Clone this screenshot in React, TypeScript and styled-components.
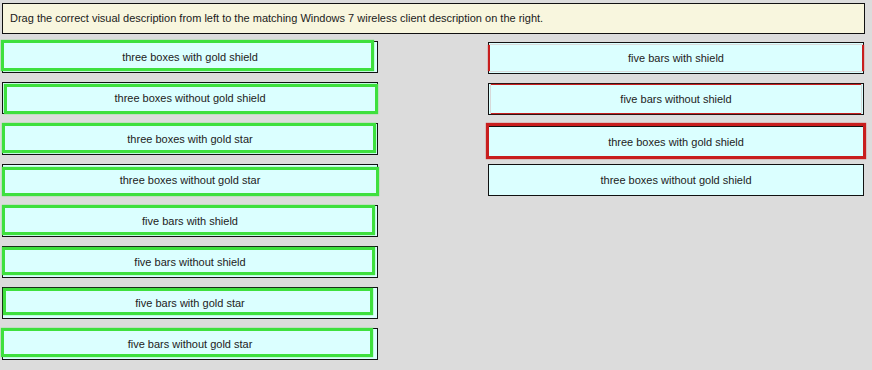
import styled, { createGlobalStyle } from 'styled-components'

const GlobalStyle = createGlobalStyle`
    html, body {
        margin: 0;
        padding: 0;
        background: #dcdcdc;
    }
    body {
        font-family: Arial, "Liberation Sans", sans-serif;
    }
`

const Page = styled.div`
    box-sizing: border-box;
    min-height: 370px;
    padding: 3px 0 0 2px;
    background: #dcdcdc;
`

const Instructions = styled.div`
    box-sizing: border-box;
    width: 863px;
    height: 31px;
    padding-left: 7px;
    border: 1px solid #111;
    background: #f8f6de;
    color: #1a1a1a;
    font-size: 11px;
    line-height: 29px;
`

const Board = styled.div`
    display: flex;
    gap: 110px;
    margin-top: 7px;
`

const Column = styled.div<{ $gap: number }>`
    display: flex;
    flex-direction: column;
    gap: ${p => p.$gap}px;
    width: 376px;
`

const Card = styled.div<{ $mt?: number }>`
    position: relative;
    box-sizing: border-box;
    height: 32px;
    margin-top: ${p => p.$mt ?? 0}px;
    display: flex;
    align-items: center;
    justify-content: center;
    border: 1px solid #111;
    background: #dbffff;
    color: #222;
    font-size: 11px;
`

type Inset = [number, number, number, number]

const Frame = styled.div<{ $inset: Inset; $color: string; $width: string }>`
    position: absolute;
    top: ${p => p.$inset[0]}px;
    right: ${p => p.$inset[1]}px;
    bottom: ${p => p.$inset[2]}px;
    left: ${p => p.$inset[3]}px;
    border-style: solid;
    border-color: ${p => p.$color};
    border-width: ${p => p.$width};
    box-shadow: 0 0 1px ${p => p.$color};
    pointer-events: none;
`

const GREEN = '#3ee03e'
const RED = '#c81e1e'

const choices: { label: string; inset: Inset }[] = [
    { label: 'three boxes with gold shield', inset: [-2, 3, 1, -2] },
    { label: 'three boxes without gold shield', inset: [1, -1, -1, 1] },
    { label: 'three boxes with gold star', inset: [-1, 1, 1, -1] },
    { label: 'three boxes without gold star', inset: [2, -2, -1, -1] },
    { label: 'five bars with shield', inset: [-1, 2, 1, -1] },
    { label: 'five bars without shield', inset: [0, 2, 2, -1] },
    { label: 'five bars with gold star', inset: [0, 4, 3, 0] },
    { label: 'five bars without gold star', inset: [-1, 4, 2, -2] },
]

const targets: { label: string; mt: number; frame?: { inset: Inset; width: string } }[] = [
    { label: 'five bars with shield', mt: 1, frame: { inset: [2, -1, 2, -1], width: '0 2px' } },
    { label: 'five bars without shield', mt: 9, frame: { inset: [0, 2, 0, 2], width: '1px 0' } },
    { label: 'three boxes with gold shield', mt: 11, frame: { inset: [-4, -3, -2, -3], width: '3px' } },
    { label: 'three boxes without gold shield', mt: 6 },
]

export default function App() {
    return (
        <>
            <GlobalStyle />
            <Page>
                <Instructions>
                    Drag the correct visual description from left to the matching Windows 7 wireless client description on the right.
                </Instructions>
                <Board>
                    <Column $gap={9}>
                        {choices.map(({ label, inset }) => (
                            <Card key={label}>
                                {label}
                                <Frame $inset={inset} $color={GREEN} $width="3px" />
                            </Card>
                        ))}
                    </Column>
                    <Column $gap={0}>
                        {targets.map(({ label, mt, frame }) => (
                            <Card key={label} $mt={mt}>
                                {label}
                                {frame && <Frame $inset={frame.inset} $color={RED} $width={frame.width} />}
                            </Card>
                        ))}
                    </Column>
                </Board>
            </Page>
        </>
    )
}
